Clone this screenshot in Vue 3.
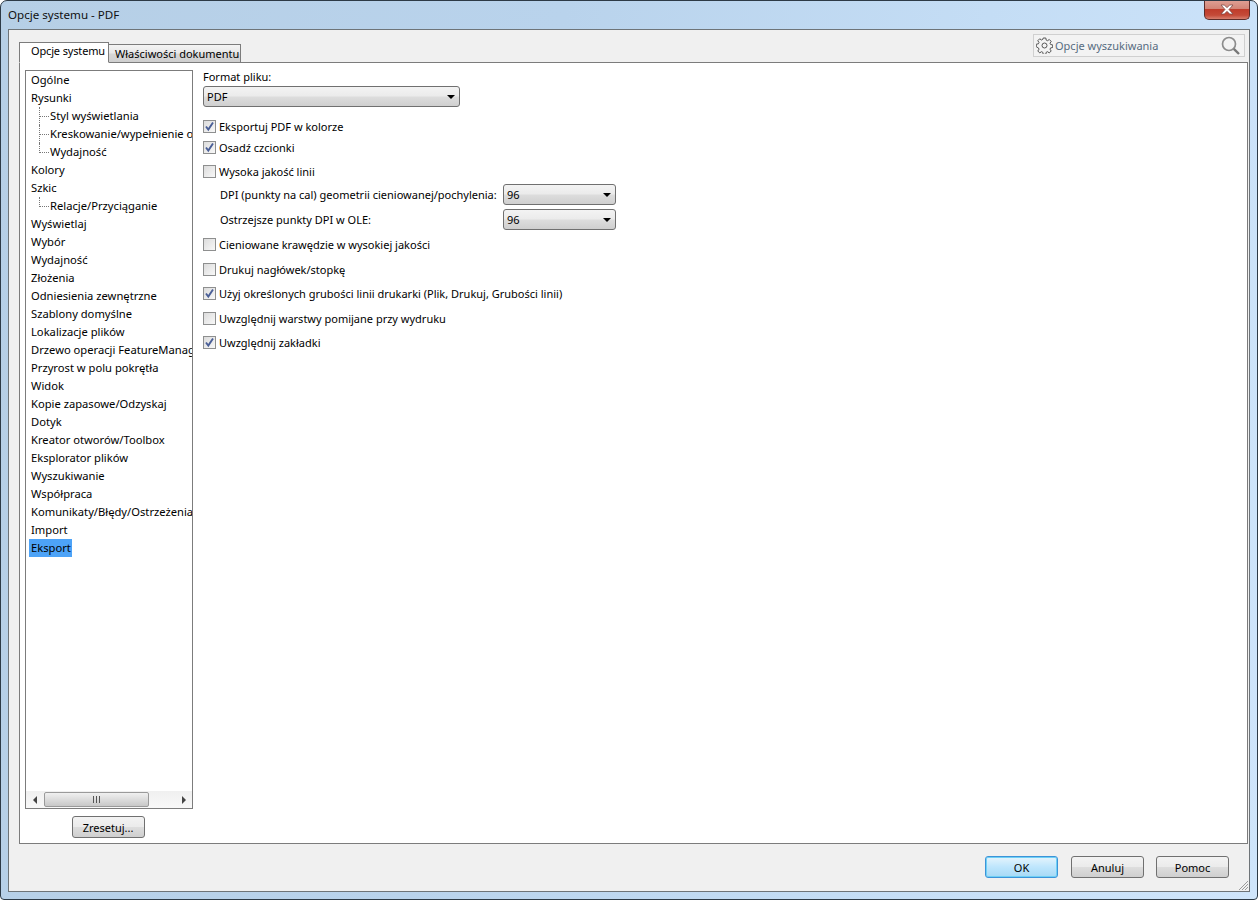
<script setup>
const tree = [
  { t: 'Ogólne' }, { t: 'Rysunki' },
  { t: 'Styl wyświetlania', sub: 1 },
  { t: 'Kreskowanie/wypełnienie obszaru', sub: 1 },
  { t: 'Wydajność', sub: 2 },
  { t: 'Kolory' }, { t: 'Szkic' },
  { t: 'Relacje/Przyciąganie', sub: 2 },
  { t: 'Wyświetlaj' }, { t: 'Wybór' }, { t: 'Wydajność' }, { t: 'Złożenia' },
  { t: 'Odniesienia zewnętrzne' }, { t: 'Szablony domyślne' }, { t: 'Lokalizacje plików' },
  { t: 'Drzewo operacji FeatureManager' }, { t: 'Przyrost w polu pokrętła' }, { t: 'Widok' },
  { t: 'Kopie zapasowe/Odzyskaj' }, { t: 'Dotyk' }, { t: 'Kreator otworów/Toolbox' },
  { t: 'Eksplorator plików' }, { t: 'Wyszukiwanie' }, { t: 'Współpraca' },
  { t: 'Komunikaty/Błędy/Ostrzeżenia' }, { t: 'Import' }, { t: 'Eksport', sel: true }
]
const rows = [
  { t: 'Eksportuj PDF w kolorze', on: true, top: 0 },
  { t: 'Osadź czcionki', on: true, top: 3 },
  { t: 'Wysoka jakość linii', on: false, top: 6 },
  { label: 'DPI (punkty na cal) geometrii cieniowanej/pochylenia:', top: 4 },
  { label: 'Ostrzejsze punkty DPI w OLE:', top: 4 },
  { t: 'Cieniowane krawędzie w wysokiej jakości', on: false, top: 5 },
  { t: 'Drukuj nagłówek/stopkę', on: false, top: 7 },
  { t: 'Użyj określonych grubości linii drukarki (Plik, Drukuj, Grubości linii)', on: true, top: 6 },
  { t: 'Uwzględnij warstwy pomijane przy wydruku', on: false, top: 7 },
  { t: 'Uwzględnij zakładki', on: true, top: 6 }
]
</script>

<template>
  <div class="window">
    <header class="titlebar">
      <span class="title">Opcje systemu - PDF</span>
      <button class="close" aria-label="Zamknij">
        <svg width="14" height="11" viewBox="0 0 14 11">
          <path d="M1 1h3.2L7 3.6 9.8 1H13L9 5.5l4 4.500H9.800L7 7.400 4.200 10H1l4-4.500z" fill="#fff" stroke="#7d4a48" stroke-width=".8" />
        </svg>
      </button>
    </header>
    <main class="client">
      <div class="tabbar">
        <div class="tabs">
          <div class="tab active">Opcje systemu</div>
          <div class="tab">Właściwości dokumentu</div>
        </div>
        <div class="search">
          <svg class="gear" width="17" height="17" viewBox="0 0 17 17" fill="none" stroke="#555" stroke-width="1">
            <circle cx="8.500" cy="8.500" r="2.500" />
            <path d="M7.200 1h2.600l.4 2.100 1.300.6 1.800-1.200 1.900 1.900-1.200 1.800.6 1.300 2.100.4v2.600l-2.100.4-.6 1.300 1.200 1.800-1.900 1.900-1.800-1.200-1.300.6-.4 2.100H7.200l-.4-2.100-1.300-.6-1.800 1.200-1.900-1.900 1.200-1.800-.6-1.300L.3 9.800V7.200l2.100-.4.6-1.300-1.200-1.800 1.900-1.900 1.800 1.200 1.300-.6z" />
          </svg>
          <span class="search-text">Opcje wyszukiwania</span>
          <svg class="lens" width="20" height="20" viewBox="0 0 20 20" fill="none">
            <circle cx="8" cy="8" r="6.500" stroke="#8c8c8c" stroke-width="1.700" />
            <path d="M12.800 12.800l5.200 5.200" stroke="#777" stroke-width="2.400" />
          </svg>
        </div>
      </div>
      <section class="panel">
        <aside class="side">
          <div class="treebox">
            <div class="tree">
              <div v-for="n in tree" :key="n.t + (n.sub || '')" class="node" :class="{ sub: n.sub, last: n.sub === 2 }">
                <span class="node-text" :class="{ sel: n.sel }">{{ n.t }}</span>
              </div>
            </div>
            <div class="hscroll">
              <svg class="sarrow" width="18" height="16" viewBox="0 0 18 16"><path d="M7 8l4-4v8z" fill="#444" /></svg>
              <div class="thumb"><span class="grip"></span></div>
              <svg class="sarrow right" width="18" height="16" viewBox="0 0 18 16"><path d="M12 8L8 4v8z" fill="#444" /></svg>
            </div>
          </div>
          <div class="reset-wrap"><button class="btn">Zresetuj...</button></div>
        </aside>
        <div class="content">
          <div class="fmt-label">Format pliku:</div>
          <div class="combo wide">PDF<i class="caret"></i></div>
          <div class="options">
            <div v-for="r in rows" :key="r.t || r.label" class="row" :style="{ marginTop: r.top + 'px' }">
              <template v-if="r.label">
                <span class="dpi-label">{{ r.label }}</span>
                <div class="combo small">96<i class="caret"></i></div>
              </template>
              <template v-else>
                <span class="check">
                  <svg v-if="r.on" width="11" height="11" viewBox="0 0 11 11">
                    <path d="M2 5.500l2.300 3L9 1.500" fill="none" stroke="#4a5f97" stroke-width="1.900" />
                  </svg>
                </span>
                <span class="row-text">{{ r.t }}</span>
              </template>
            </div>
          </div>
        </div>
      </section>
      <footer class="footer">
        <button class="btn default">OK</button>
        <button class="btn">Anuluj</button>
        <button class="btn">Pomoc</button>
      </footer>
      <svg class="resize" width="13" height="13" viewBox="0 0 13 13" stroke="#9a9a9a" stroke-width="1">
        <path d="M12 3l-9 9M12 6l-6 6M12 9l-3 3" />
      </svg>
    </main>
  </div>
</template>

<style>
html, body { margin: 0; background: #fff; }
</style>

<style scoped>
* { box-sizing: border-box; }
.window {
  width: 1258px; height: 900px;
  display: flex; flex-direction: column;
  padding: 0 7px 7px;
  border: 1px solid #2d3a46;
  border-radius: 7px 7px 4px 4px;
  background: linear-gradient(100deg, #b6cfe6 0%, #b9d3ec 40%, #c4ddf5 70%, #cfe5fb 100%);
  font-family: "Noto Sans", "Open Sans", sans-serif;
  font-size: 11px;
  color: #000;
  position: relative;
  overflow: hidden;
}
.titlebar { height: 28px; flex: none; display: flex; align-items: flex-start; justify-content: space-between; margin-left: -7px; margin-right: -7px; padding-left: 7px; padding-right: 7px; }
.title { font-size: 11.600px; line-height: 28px; color: #111; }
.close {
  width: 46px; height: 20px; margin-top: -1px; padding: 0; display: flex; align-items: center; justify-content: center;
  border: 1px solid #5c2d2a; border-top: none; border-radius: 0 0 5px 5px;
  background: linear-gradient(#e0a196 0%, #d28577 45%, #bf3c2b 50%, #c44a38 80%, #d77f6e 100%);
}
.client {
  flex: 1; min-height: 0; display: flex; flex-direction: column;
  background: #f0f0f0; border: 1px solid #6e7478; padding: 0 1px 0 10px; position: relative;
}
.tabbar { height: 32px; flex: none; display: flex; align-items: flex-end; justify-content: space-between; position: relative; }
.tabs { display: flex; align-items: flex-end; margin-bottom: -1px; position: relative; z-index: 1; }
.tab {
  width: 132px; height: 19px; line-height: 17px; padding-left: 6px; white-space: nowrap;
  border: 1px solid #7c7c7c; border-left: none; border-bottom-color: #7c7c7c;
  background: linear-gradient(#f4f4f4, #e8e8e8 45%, #d6d6d6 55%, #cfcfcf);
}
.tab.active {
  width: 90px; height: 21px; line-height: 16px; padding-left: 11px; letter-spacing: -.15px; background: #fff; border-left: 1px solid #7c7c7c; border-bottom-color: #fff;
}
.search {
  width: 212px; height: 23px; margin-bottom: 5px; margin-right: 3px; display: flex; align-items: center; padding: 0 3px 0 2px;
  border: 1px solid #d0d0d0; background: #f3f3f3; color: #566b80;
}
.gear { flex: none; }
.search-text { margin-left: 2px; flex: 1; }
.lens { flex: none; }
.panel {
  height: 782px; flex: none; display: flex; background: #fff; border: 1px solid #7c7c7c; padding: 7px 5px 0;
}
.side { width: 168px; flex: none; display: flex; flex-direction: column; }
.treebox { height: 739px; flex: none; border: 1px solid #7c7c7c; display: flex; flex-direction: column; background: #fff; }
.tree { flex: 1; min-height: 0; overflow: hidden; padding: 0 0 0 3px; font-size: 11.200px; }
.node { height: 18px; line-height: 18px; white-space: nowrap; padding-left: 2px; position: relative; }
.node-text { display: inline-block; }
.node.sub { padding-left: 21px; }
.node.sub::before {
  content: ""; position: absolute; left: 10px; top: 0; width: 9px; height: 9px;
  border-left: 1px dotted #777; border-bottom: 1px dotted #777;
}
.node.sub:not(.last)::after {
  content: ""; position: absolute; left: 10px; top: 9px; height: 9px; border-left: 1px dotted #777;
}
.node-text.sel { background: #4da3f7; padding: 0 1px 0 2px; margin-left: -2px; }
.hscroll {
  height: 17px; flex: none; display: flex; align-items: center;
  background: linear-gradient(#f0f0f0, #f8f8f8);
}
.sarrow { flex: none; }
.thumb {
  width: 105px; height: 15px; flex: none; display: flex; align-items: center; justify-content: center;
  border: 1px solid #9a9a9a; border-radius: 2px;
  background: linear-gradient(#f0f0f0, #dcdcdc 50%, #c8c8c8);
}
.grip { width: 8px; height: 7px; background: repeating-linear-gradient(90deg, #555 0 1px, transparent 1px 3px); }
.sarrow.right { margin-left: auto; }
.reset-wrap { display: flex; justify-content: center; padding-top: 7px; padding-right: 2px; }
.btn {
  width: 73px; height: 22px; padding: 0; font: inherit; color: #000;
  border: 1px solid #707070; border-radius: 3px;
  background: linear-gradient(#f3f3f3, #ebebeb 48%, #dddddd 52%, #cfcfcf);
}
.btn.default {
  border-color: #3c93d8; box-shadow: inset 0 0 0 1px #6fd0f5; margin-right: 1px;
  background: linear-gradient(#e6f4fc, #bee6fd 50%, #a7d9f5);
}
.content { flex: 1; padding-left: 10px; min-width: 0; }
.fmt-label { height: 16px; line-height: 14px; }
.combo {
  height: 21px; line-height: 20px; padding-left: 3px; position: relative;
  border: 1px solid #707070; border-radius: 3px;
  background: linear-gradient(#f3f3f3, #ebebeb 48%, #dddddd 52%, #cfcfcf);
}
.combo.wide { width: 257px; }
.combo.small { width: 113px; flex: none; height: 21px; }
.caret {
  position: absolute; right: 4px; top: 8px; width: 0; height: 0;
  border: 4px solid transparent; border-top: 4px solid #000; border-bottom: none;
}
.options { margin-top: 10px; display: flex; flex-direction: column; }
.row { min-height: 18px; display: flex; align-items: center; white-space: nowrap; }
.check {
  width: 13px; height: 13px; flex: none; display: flex; align-items: center; justify-content: center;
  border: 1px solid #8e8f8f; background: linear-gradient(135deg, #dcdcdc, #f8f8f8);
}
.row-text { margin-left: 3px; }
.dpi-label { width: 300px; padding-left: 17px; flex: none; }
.footer { flex: 1; display: flex; align-items: center; justify-content: flex-end; gap: 12px; padding-right: 19px; padding-bottom: 1px; }
.resize { position: absolute; right: 0; bottom: 0; }
</style>
